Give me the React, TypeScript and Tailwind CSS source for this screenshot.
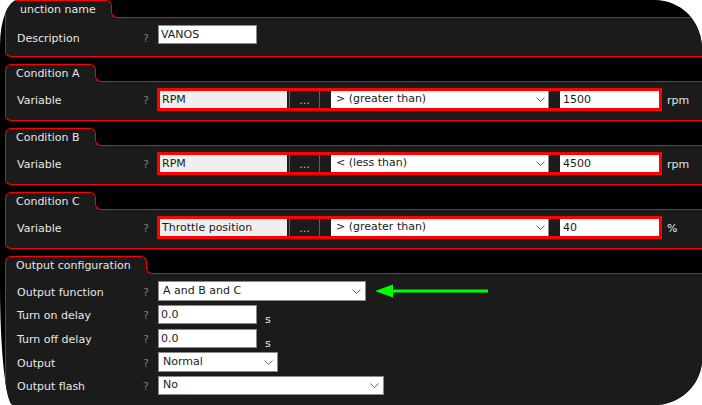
import type { ReactNode } from 'react'

function Chevron({ className = '' }: { className?: string }) {
  return (
    <svg width="9" height="5" viewBox="0 0 9 5" className={`shrink-0 ${className}`}>
      <polyline points="0.5,0.5 4.5,4.5 8.5,0.5" fill="none" stroke="#6b6b6b" strokeWidth="1" />
    </svg>
  )
}

function Panel({
  title,
  children,
  className = '',
  titlePad = 'pl-[10px]',
}: {
  title: string
  children: ReactNode
  className?: string
  titlePad?: string
}) {
  return (
    <section className={`ml-[5px] w-[720px] flex flex-col ${className}`}>
      {/* tab + top line */}
      <div className="flex h-[18px]">
        <div className={`shrink-0 h-[18px] rounded-t-[6px] border border-b-0 border-[#ff0000] bg-[#1b1b1b] ${titlePad} pr-[15px] leading-[17px] text-[#e6e6e6]`}>
          {title}
        </div>
        <div className="flex-1 -ml-px flex flex-col justify-end">
          <div className="h-[11px] bg-[#1b1b1b]">
            <div className="h-full bg-black border-l border-b border-[#ff0000] rounded-bl-[6px]" />
          </div>
        </div>
      </div>
      <div className="border border-t-0 border-[#ff0000] rounded-b-[6px] bg-[#1b1b1b]">{children}</div>
    </section>
  )
}

function Label({ text, className = 'pt-[4px]' }: { text: string; className?: string }) {
  return (
    <>
      <span className={`w-[126px] shrink-0 text-[#e8e8e8] ${className}`}>{text}</span>
      <span className={`w-[15px] shrink-0 text-[#7c7c7c] ${className}`}>?</span>
    </>
  )
}

function ConditionRow({ variable, op, value, unit }: { variable: string; op: string; value: string; unit: string }) {
  return (
    <div className="h-[38px] pt-[6px]">
      <div className="flex items-center h-[23px] pl-[11px]">
        <Label text="Variable" />
        <div className="-ml-px flex h-[23px] border-[3px] border-[#ff0000] bg-[#1b1b1b]">
          <div className="w-[127px] bg-[#efefef] pl-[2px] leading-[17px] text-[#1a1a1a]">{variable}</div>
          <div className="ml-[2px] w-[31px] border-x border-[#5e5e5e] flex items-end justify-center pb-[1px] leading-[12px] text-[#c4c4c4]">
            ...
          </div>
          <div className="ml-[11px] w-[218px] bg-white border-r border-[#8a8a8a] flex items-center pl-[5px] text-[#1a1a1a]">
            <span>{op}</span>
            <Chevron className="ml-auto mr-[3px]" />
          </div>
          <div className="ml-[11px] w-[99px] bg-white pl-[3px] leading-[17px] text-[#1a1a1a]">{value}</div>
        </div>
        <span className="ml-[5px] pt-[4px] text-[#e8e8e8]">{unit}</span>
      </div>
    </div>
  )
}

function Select({ value, width, height }: { value: string; width: string; height: string }) {
  return (
    <div className={`${width} ${height} bg-white border border-[#8a8a8a] flex items-center pl-[4px] text-[#1a1a1a]`}>
      <span>{value}</span>
      <Chevron className="ml-auto mr-[4px]" />
    </div>
  )
}

function TextInput({ value }: { value: string }) {
  return (
    <div className="w-[99px] h-[19px] bg-white border border-[#8a8a8a] pl-[2px] leading-[17px] text-[#1a1a1a]">{value}</div>
  )
}

export default function App() {
  return (
    <div className="w-[702px] h-[405px] bg-white">
      <div className="w-full h-full overflow-hidden bg-black rounded-tl-[18px_45px] rounded-tr-[47px_49px] rounded-br-[48px_46px] rounded-bl-[13px_120px] font-['DejaVu_Sans',sans-serif] text-[11px]">
        <Panel title="unction name" titlePad="pl-[14px]">
          <div className="h-[38px] pt-[7px]">
            <div className="flex items-center h-[19px] pl-[11px]">
              <Label text="Description" className="pt-[9px]" />
              <TextInput value="VANOS" />
            </div>
          </div>
        </Panel>

        <Panel title="Condition A" className="mt-[7px]">
          <ConditionRow variable="RPM" op="> (greater than)" value="1500" unit="rpm" />
        </Panel>

        <Panel title="Condition B" className="mt-[7px]">
          <ConditionRow variable="RPM" op="< (less than)" value="4500" unit="rpm" />
        </Panel>

        <Panel title="Condition C" className="mt-[7px]">
          <ConditionRow variable="Throttle position" op="> (greater than)" value="40" unit="%" />
        </Panel>

        <Panel title="Output configuration" className="mt-[7px]">
          <div className="pt-[7px] pb-[10px] pl-[11px] flex flex-col gap-[4px]">
            <div className="flex items-center h-[20px]">
              <Label text="Output function" />
              <Select value="A and B and C" width="w-[208px]" height="h-[20px]" />
              <svg width="114" height="14" viewBox="0 0 114 14" className="ml-[9px]">
                <polygon points="0,7 18,0.5 18,13.5" fill="#00ff00" />
                <rect x="17" y="5.5" width="96" height="3" fill="#00ff00" />
              </svg>
            </div>
            <div className="flex items-center h-[19px]">
              <Label text="Turn on delay" />
              <TextInput value="0.0" />
              <span className="ml-[8px] pt-[12px] text-[#e8e8e8]">s</span>
            </div>
            <div className="flex items-center h-[20px]">
              <Label text="Turn off delay" />
              <TextInput value="0.0" />
              <span className="ml-[8px] pt-[12px] text-[#e8e8e8]">s</span>
            </div>
            <div className="flex items-center h-[20px]">
              <Label text="Output" />
              <Select value="Normal" width="w-[120px]" height="h-[20px]" />
            </div>
            <div className="flex items-center h-[19px]">
              <Label text="Output flash" />
              <Select value="No" width="w-[226px]" height="h-[19px]" />
            </div>
          </div>
        </Panel>
      </div>
    </div>
  )
}
